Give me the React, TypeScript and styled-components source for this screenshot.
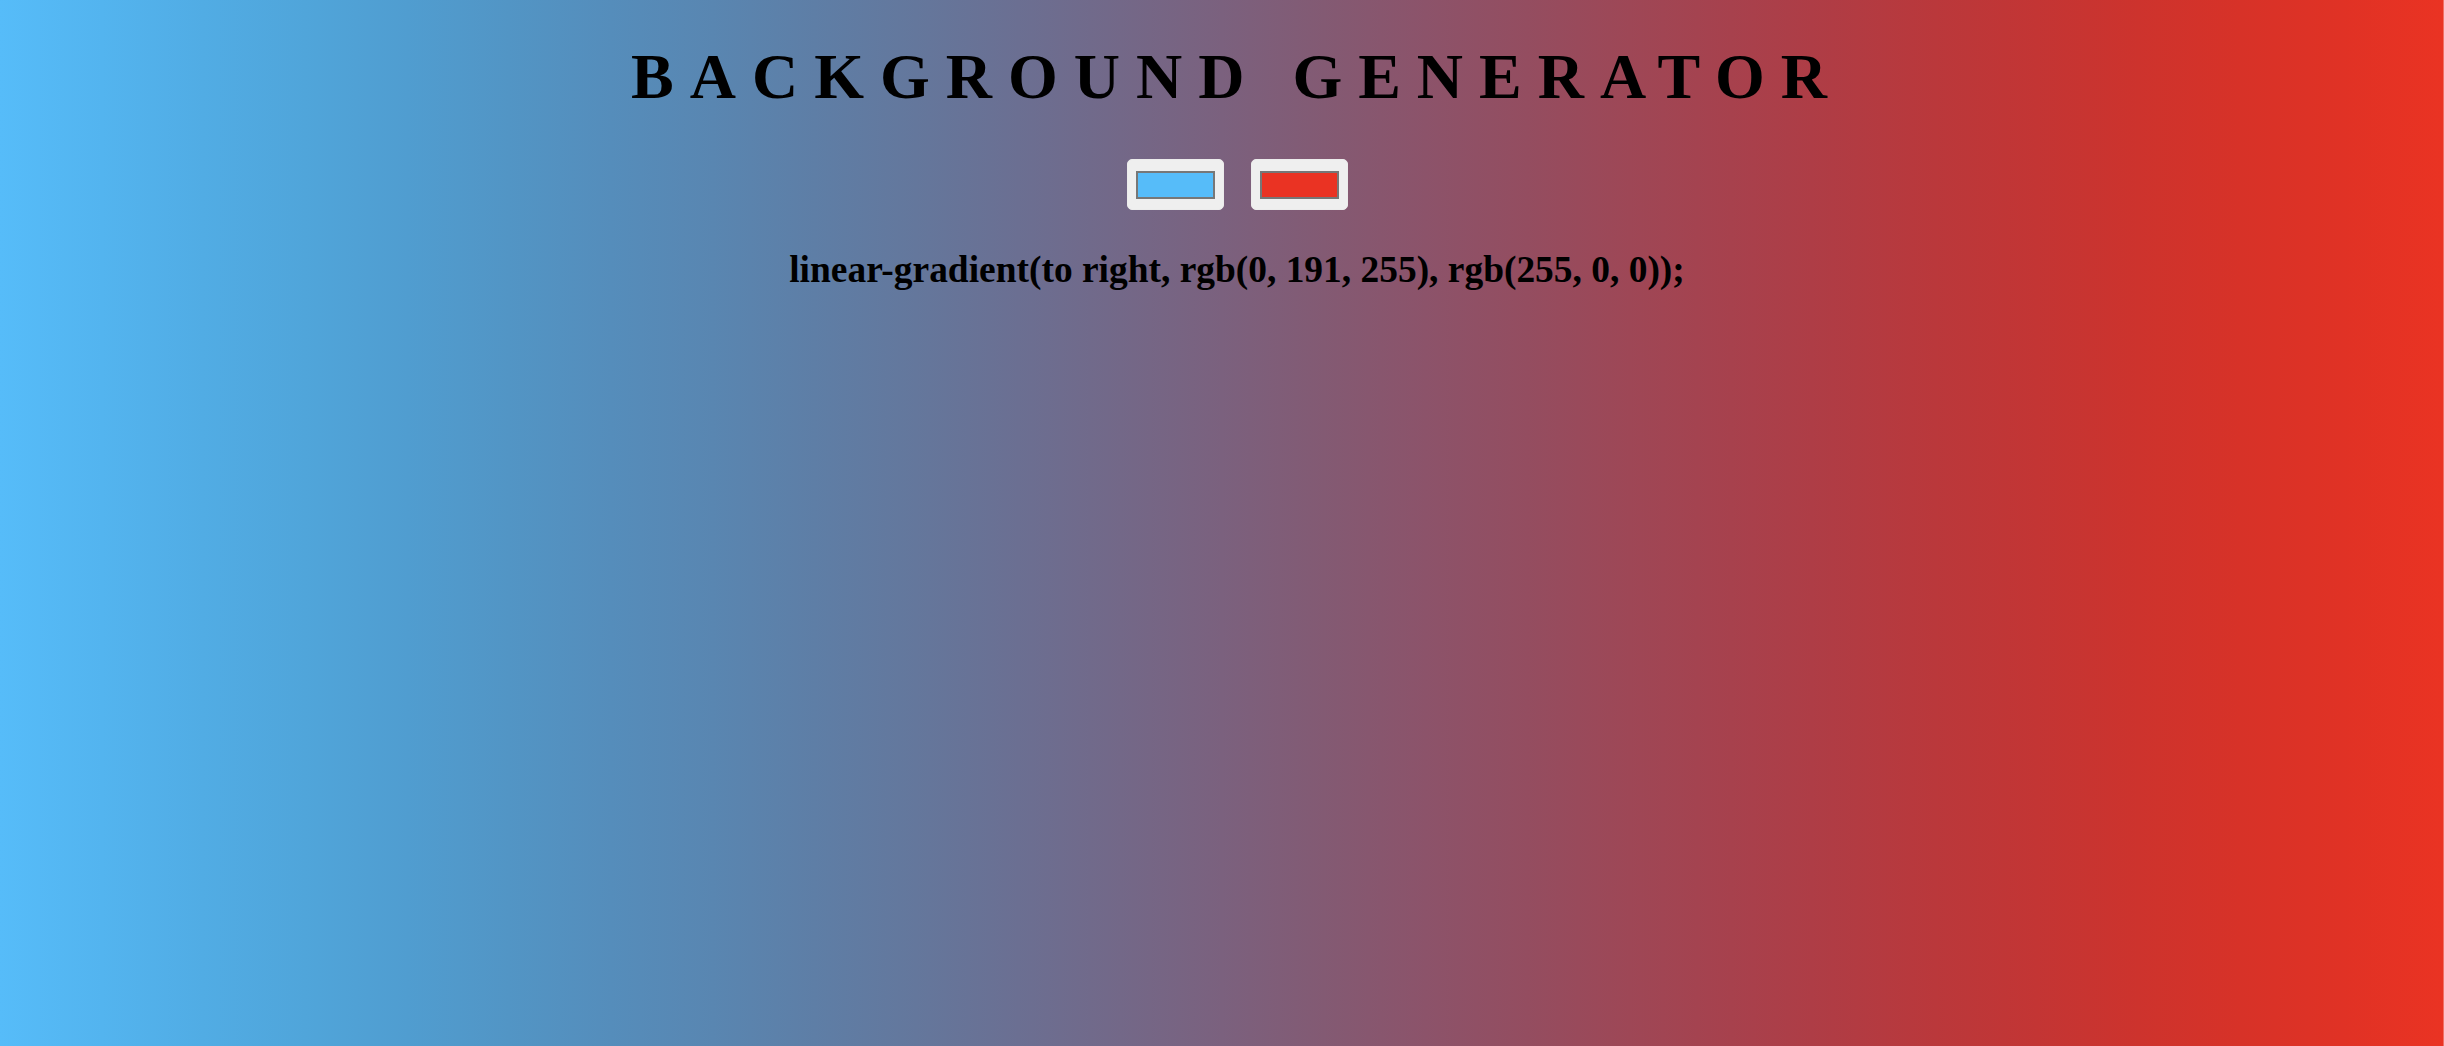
import React from "react";
import styled, { createGlobalStyle } from "styled-components";

// The reference shows sRGB colours re-encoded as Display-P3 values.
const toLin = (v: number) => (v <= 0.04045 ? v / 12.92 : Math.pow((v + 0.055) / 1.055, 2.4));
const toEnc = (v: number) => (v <= 0.0031308 ? v * 12.92 : 1.055 * Math.pow(v, 1 / 2.4) - 0.055);
const toP3 = (r: number, g: number, b: number) => {
  const [lr, lg, lb] = [r, g, b].map((c) => toLin(c / 255));
  const pr = 0.8224621 * lr + 0.177538 * lg;
  const pg = 0.0331941 * lr + 0.9668058 * lg;
  const pb = 0.0170827 * lr + 0.0723974 * lg + 0.9105199 * lb;
  return [pr, pg, pb].map((c) => Math.round(Math.min(1, Math.max(0, toEnc(c))) * 255));
};
const hex = (c: number[]) => "#" + c.map((v) => v.toString(16).padStart(2, "0")).join("");

const FROM = [0, 191, 255];
const TO = [255, 0, 0];
const STEPS = 24;
const stops = Array.from({ length: STEPS + 1 }, (_, i) => {
  const t = i / STEPS;
  const c = FROM.map((f, k) => f + (TO[k] - f) * t);
  return `rgb(${toP3(c[0], c[1], c[2]).join(",")}) ${(t * 100).toFixed(2)}%`;
}).join(", ");
const fromHex = hex(toP3(FROM[0], FROM[1], FROM[2]));
const toHex = hex(toP3(TO[0], TO[1], TO[2]));

const GlobalStyle = createGlobalStyle`
  html, body { margin: 0; padding: 0; }
  body { font-family: "Liberation Serif", "Times New Roman", serif; }
`;

const Page = styled.div`
  min-height: 100vh;
  box-sizing: border-box;
  padding: 40px 0 0 30px;
  display: flex;
  flex-direction: column;
  align-items: center;
  background: linear-gradient(to right, ${stops});
  box-shadow: inset -1px 0 0 rgba(255, 255, 255, 0.3);
`;

const Title = styled.h1`
  margin: 0;
  font-family: "Liberation Serif", "Times New Roman", serif;
  font-weight: 700;
  font-size: 64px;
  line-height: normal;
  letter-spacing: 16px;
  color: #000;
`;

const Controls = styled.div`
  margin-top: 45px;
  display: flex;
  gap: 27px;
`;

const ColorInput = styled.input`
  -webkit-appearance: none;
  appearance: none;
  box-sizing: border-box;
  width: 97px;
  height: 51px;
  margin: 0;
  padding: 11px 8px 10px;
  border: 1px solid #ececec;
  border-radius: 5px;
  background: #efefef;
  cursor: pointer;

  &::-webkit-color-swatch-wrapper {
    padding: 0;
  }
  &::-webkit-color-swatch {
    border: 2px solid #777777;
    border-radius: 0;
  }
`;

const Output = styled.h3`
  margin: 38px 0 0;
  font-family: "Liberation Serif", "Times New Roman", serif;
  font-weight: 700;
  font-size: 37.44px;
  line-height: normal;
  color: #000;
`;

export default function App() {
  return (
    <>
      <GlobalStyle />
      <Page>
        <Title>BACKGROUND GENERATOR</Title>
        <Controls>
          <ColorInput type="color" defaultValue={fromHex} name="color1" />
          <ColorInput type="color" defaultValue={toHex} name="color2" />
        </Controls>
        <Output>linear-gradient(to right, rgb(0, 191, 255), rgb(255, 0, 0));</Output>
      </Page>
    </>
  );
}
